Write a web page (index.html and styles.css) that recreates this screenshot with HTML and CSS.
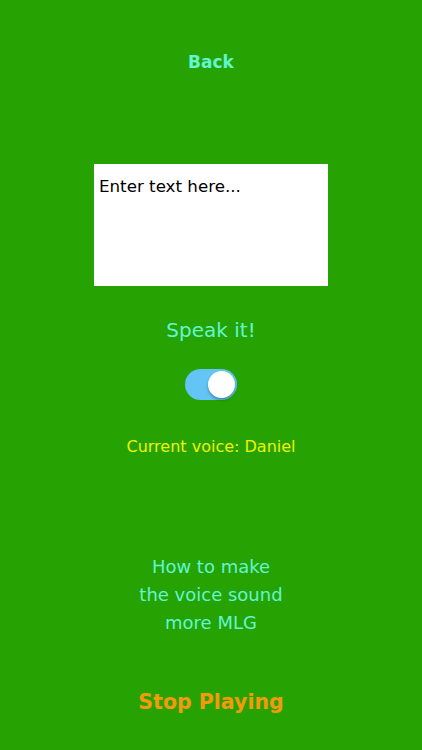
FILE: index.html
```html
<!DOCTYPE html>
<html>
<head>
<meta charset="utf-8">
<link rel="stylesheet" href="styles.css">
</head>
<body>
<main class="screen">
  <div class="back">Back</div>
  <div class="box"><span class="placeholder">Enter text here...</span></div>
  <div class="speak">Speak it!</div>
  <div class="toggle"><div class="knob"></div></div>
  <div class="voice">Current voice: Daniel</div>
  <div class="howto">How to make<br>the voice sound<br>more MLG</div>
  <div class="stop">Stop Playing</div>
</main>
</body>
</html>
```
FILE: styles.css
```css
html, body {
  margin: 0;
  padding: 0;
  background: #26a302;
}
.screen {
  width: 422px;
  height: 750px;
  display: flex;
  flex-direction: column;
  align-items: center;
  font-family: "DejaVu Sans", sans-serif;
  text-align: center;
}
.back {
  margin-top: 50px;
  height: 24px;
  line-height: 24px;
  font-size: 17px;
  font-weight: bold;
  color: #62f5d2;
}
.box {
  margin-top: 90px;
  width: 234px;
  height: 122px;
  background: #ffffff;
  text-align: left;
  box-sizing: border-box;
  padding: 10px 5px;
}
.placeholder {
  font-size: 16.7px;
  line-height: 24px;
  color: #000;
}
.speak {
  margin-top: 29px;
  height: 30px;
  line-height: 30px;
  font-size: 20px;
  color: #62f5d2;
}
.toggle {
  margin-top: 24px;
  width: 52px;
  height: 31px;
  border-radius: 16px;
  background: #63c4f5;
  display: flex;
  align-items: center;
  justify-content: flex-end;
  padding: 0 2px;
  box-sizing: border-box;
}
.knob {
  width: 27px;
  height: 27px;
  border-radius: 50%;
  background: #ffffff;
  box-shadow: 0 2px 3px rgba(0,0,0,0.3);
}
.voice {
  margin-top: 35px;
  height: 24px;
  line-height: 24px;
  font-size: 16px;
  color: #f0f200;
}
.howto {
  margin-top: 94px;
  line-height: 28px;
  font-size: 18px;
  color: #62f5d2;
}
.stop {
  margin-top: 49px;
  height: 32px;
  line-height: 32px;
  font-size: 20.5px;
  font-weight: bold;
  color: #f39a0c;
}
```
